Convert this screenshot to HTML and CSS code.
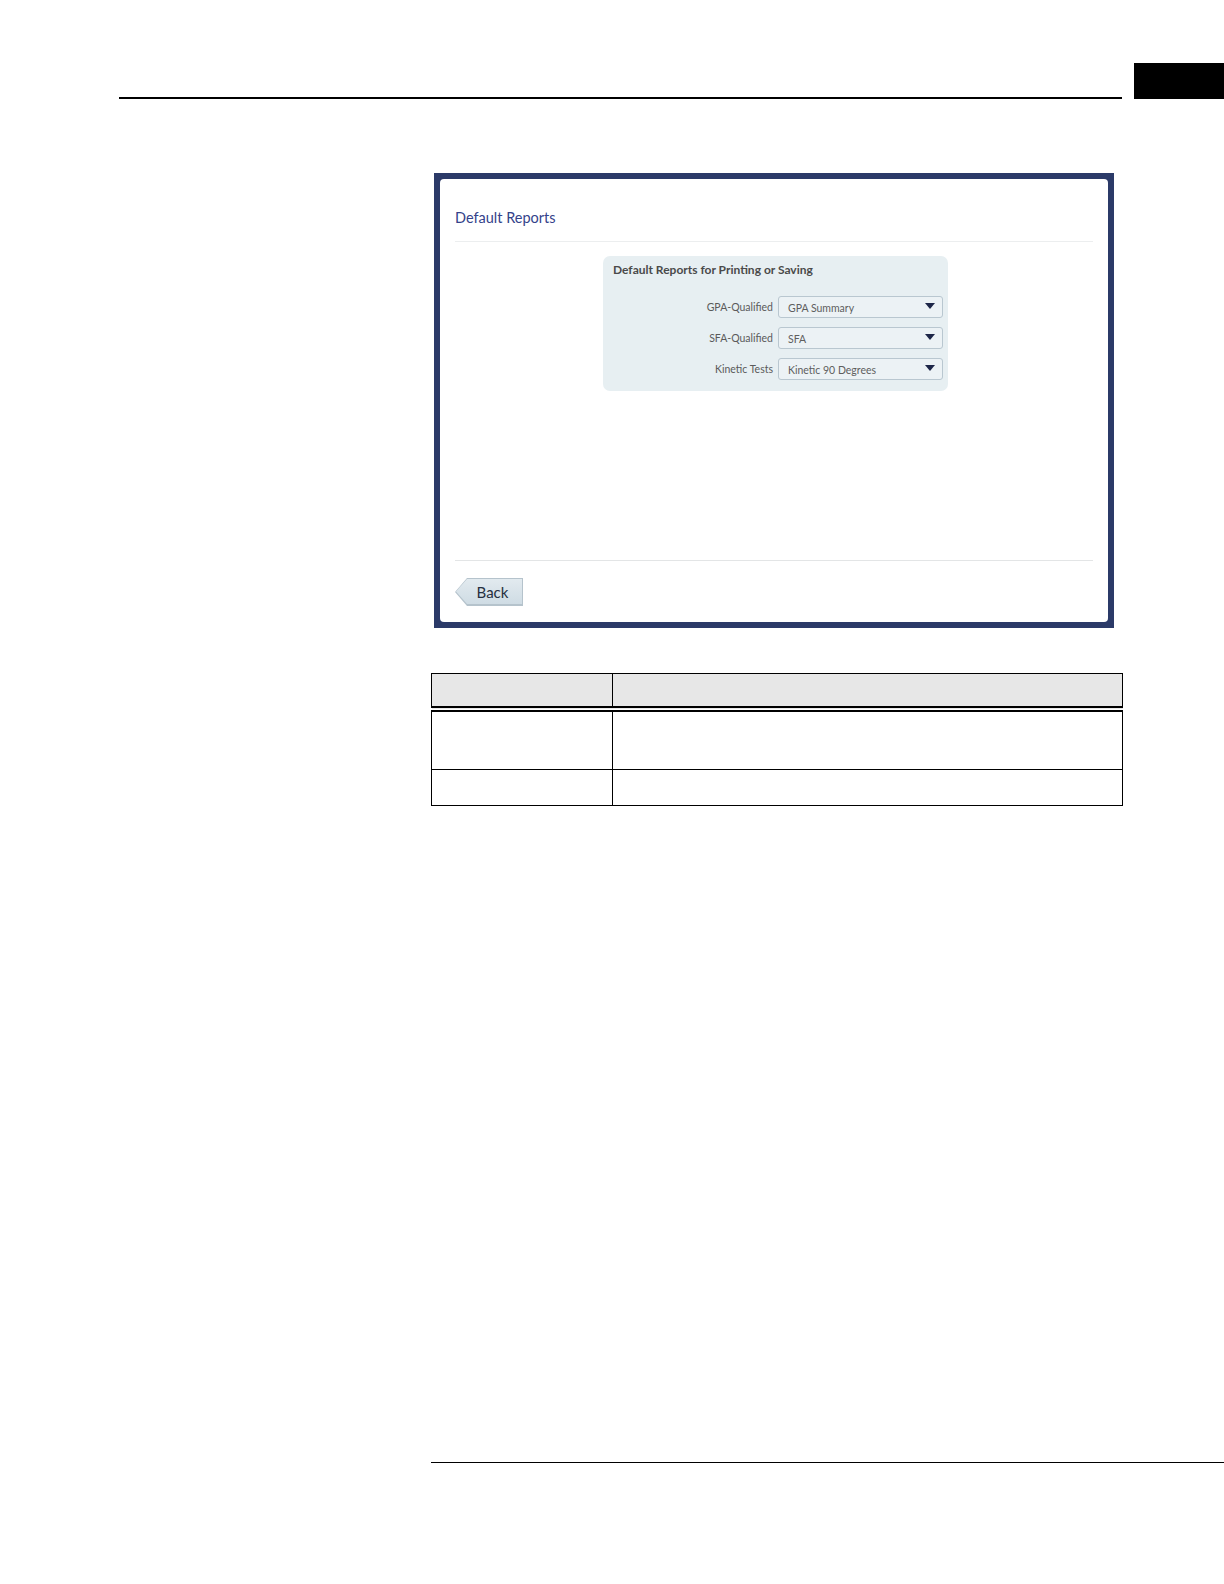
FILE: index.html
```html
<!DOCTYPE html>
<html>
<head>
<meta charset="utf-8">
<link rel="stylesheet" href="styles.css">
</head>
<body>
<div class="page">
  <header class="top">
    <div class="top-rule"></div>
    <div class="tab"></div>
  </header>

  <div class="shot">
    <div class="panel">
      <div class="panel-title">Default Reports</div>
      <div class="panel-body">
        <div class="group">
          <div class="group-title">Default Reports for Printing or Saving</div>
          <div class="rows">
            <div class="row">
              <span class="label">GPA-Qualified</span>
              <div class="select"><span>GPA Summary</span><i class="caret"></i></div>
            </div>
            <div class="row">
              <span class="label">SFA-Qualified</span>
              <div class="select"><span>SFA</span><i class="caret"></i></div>
            </div>
            <div class="row">
              <span class="label">Kinetic Tests</span>
              <div class="select"><span>Kinetic 90 Degrees</span><i class="caret"></i></div>
            </div>
          </div>
        </div>
      </div>
      <div class="panel-foot">
        <div class="back"><div class="back-inner">Back</div></div>
      </div>
    </div>
  </div>

  <table class="desc">
    <thead>
      <tr><th class="c1"></th><th class="c2"></th></tr>
    </thead>
    <tbody>
      <tr class="r1"><td></td><td></td></tr>
      <tr class="r2"><td></td><td></td></tr>
    </tbody>
  </table>

  <div class="foot-rule"></div>
</div>
</body>
</html>
```

FILE: styles.css
```css
html, body {
  margin: 0;
  padding: 0;
  background: #ffffff;
}

.page {
  width: 1224px;
  height: 1584px;
  font-family: "Liberation Sans", Arial, sans-serif;
  overflow: hidden;
}

.top {
  display: flex;
  align-items: flex-end;
  padding-top: 63px;
}

.top-rule {
  margin-left: 119px;
  width: 1003px;
  height: 2px;
  background: #000;
}

.tab {
  margin-left: 12px;
  width: 90px;
  height: 36px;
  background: #000;
}

.shot {
  margin-top: 74px;
  margin-left: 434px;
  width: 680px;
  height: 455px;
  box-sizing: border-box;
  padding: 6px;
  background: #2b3a68;
}

.panel {
  height: 100%;
  background: #fff;
  border-radius: 4px;
  display: flex;
  flex-direction: column;
  font-family: Lato, "Open Sans", sans-serif;
}

.panel-title {
  margin: 0 15px;
  padding: 30px 0 15px 0;
  font-size: 14.5px;
  color: #34428a;
  border-bottom: 1px solid #eceeef;
}

.panel-body {
  flex: 1;
  margin: 0 15px;
  padding-top: 14px;
  display: flex;
  justify-content: center;
  border-bottom: 1px solid #e3e5e6;
}

.group {
  align-self: flex-start;
  width: 345px;
  height: 135px;
  box-sizing: border-box;
  margin-left: 3px;
  background: #e7eff2;
  border-radius: 7px;
  padding: 6px 5px 0 10px;
}

.group-title {
  font-size: 12px;
  font-weight: bold;
  color: #4a4a4a;
}

.rows {
  margin-top: 19px;
  display: flex;
  flex-direction: column;
  gap: 9px;
}

.row {
  display: flex;
  align-items: center;
  justify-content: flex-end;
  gap: 5px;
}

.label {
  font-size: 10.5px;
  color: #5a5a5a;
}

.select {
  width: 165px;
  height: 22px;
  box-sizing: border-box;
  border: 1px solid #b9c7d0;
  border-radius: 3px;
  background: #ecf2f5;
  display: flex;
  align-items: center;
  justify-content: space-between;
  padding: 1px 7px 0 9px;
  font-size: 10.5px;
  color: #5e5e5e;
}

.caret {
  width: 0;
  height: 0;
  border-left: 5.5px solid transparent;
  border-right: 5.5px solid transparent;
  border-top: 6px solid #1d2648;
  margin-top: -4px;
}

.panel-foot {
  height: 61px;
  margin: 0 15px;
  padding-top: 17px;
  box-sizing: border-box;
}

.back {
  width: 68px;
  height: 28px;
  background: #b5c3cc;
  clip-path: polygon(12px 0, 100% 0, 100% 100%, 12px 100%, 0 50%);
  position: relative;
}

.back-inner {
  position: absolute;
  left: 1px;
  top: 1px;
  right: 1px;
  bottom: 2px;
  background: linear-gradient(#e2eaef, #cfdce4);
  clip-path: polygon(11px 0, 100% 0, 100% 100%, 11px 100%, 0 50%);
  font-size: 15px;
  color: #263040;
  display: flex;
  align-items: center;
  justify-content: center;
  padding-left: 7px;
  box-sizing: border-box;
}

.desc {
  margin-top: 45px;
  margin-left: 431px;
  width: 692px;
  border-collapse: collapse;
  table-layout: fixed;
}

.desc th, .desc td {
  border: 1px solid #000;
  padding: 0;
}

.desc th {
  background: #e7e7e7;
  height: 32px;
  border-bottom: 6px double #000;
}

.desc th.c1 {
  width: 180px;
}

.desc tr.r1 td {
  height: 57px;
}

.desc tr.r2 td {
  height: 35px;
}

.foot-rule {
  margin-top: 656px;
  margin-left: 431px;
  width: 793px;
  height: 1px;
  background: #000;
}
```
